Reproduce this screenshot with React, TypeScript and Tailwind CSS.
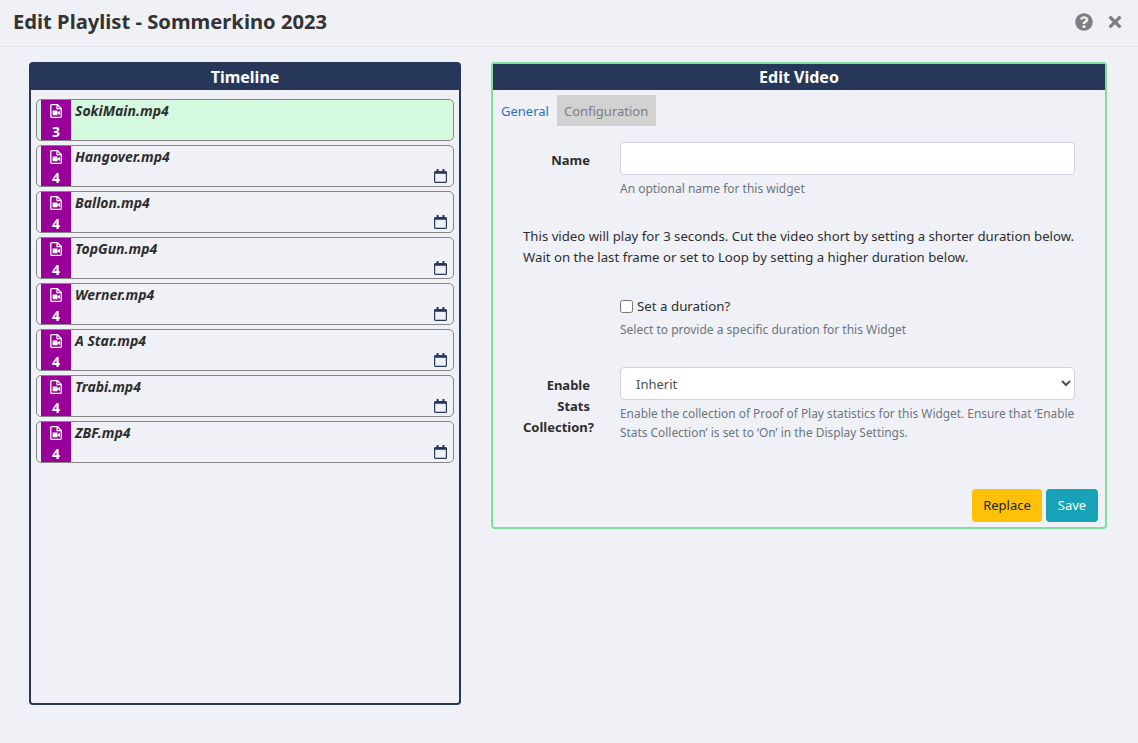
import { FaQuestionCircle, FaTimes } from "react-icons/fa";

const items = [
  { name: "SokiMain.mp4", duration: 3, active: true },
  { name: "Hangover.mp4", duration: 4 },
  { name: "Ballon.mp4", duration: 4 },
  { name: "TopGun.mp4", duration: 4 },
  { name: "Werner.mp4", duration: 4 },
  { name: "A Star.mp4", duration: 4 },
  { name: "Trabi.mp4", duration: 4 },
  { name: "ZBF.mp4", duration: 4 },
];

function FileVideoIcon() {
  return (
    <svg viewBox="0 0 12 14" className="mt-1 h-[14px] w-[12px]" fill="none">
      <path d="M1.6.7h5.9l3.8 3.8v8c0 .5-.3.8-.8.8H1.6c-.5 0-.8-.3-.8-.8V1.5c0-.5.3-.8.8-.8z" stroke="currentColor" strokeWidth="1.3" />
      <path d="M7 .7v4h4" stroke="currentColor" strokeWidth="1.2" />
      <rect x="2.6" y="6.4" width="5" height="4.8" rx=".6" fill="currentColor" />
      <path d="M7.6 8.4 10 6.8v4.2L7.6 9.4z" fill="currentColor" />
    </svg>
  );
}

function CalendarIcon() {
  return (
    <svg viewBox="0 0 13 14" className="absolute right-[6px] bottom-[3px] h-[14px] w-[13px] text-[#28385c]" fill="none">
      <rect x=".6" y="2.6" width="11.8" height="10.8" rx="1" stroke="currentColor" strokeWidth="1.2" />
      <rect x=".6" y="2.4" width="11.8" height="2.4" fill="currentColor" />
      <rect x="2.6" y="0" width="2" height="3.4" fill="currentColor" />
      <rect x="8.4" y="0" width="2" height="3.4" fill="currentColor" />
    </svg>
  );
}

function TimelineItem({ name, duration, active }: { name: string; duration: number; active?: boolean }) {
  return (
    <div
      className={`flex h-[42px] rounded-[5px] border border-[#858585] pl-1 ${active ? "bg-[#d5f8e0]" : ""}`}
    >
      <div className="flex w-[30px] flex-col items-center bg-[#99009a] text-white">
        <FileVideoIcon />
        <span className="mt-auto mb-[-1px] text-[14px] leading-[19px] font-bold">{duration}</span>
      </div>
      <div className="relative flex-1 pl-1">
        <span className="block text-[14px] leading-[21px] font-bold text-[#2e2e2e] italic">{name}</span>
        {!active && <CalendarIcon />}
      </div>
    </div>
  );
}

export default function App() {
  return (
    <div className="h-[743px] w-[1138px] overflow-hidden bg-[#f0f1f7] font-['Noto_Sans','Open_Sans',sans-serif] text-[13px] text-[#2e2e2e]">
      <div className="flex h-[47px] items-center justify-between border-b border-[#dee2e6] pr-[16px] pb-[3px] pl-[13px]">
        <h1 className="mt-[-1px] text-[20.2px] leading-[44px] font-bold text-[#333333]">Edit Playlist - Sommerkino 2023</h1>
        <div className="flex items-center gap-[15px] text-[#7f7f7f]">
          <FaQuestionCircle className="h-[18px] w-[18px]" />
          <FaTimes className="h-[18px] w-[14px]" />
        </div>
      </div>

      <div className="flex items-start pt-[15px] pl-[29px]">
        <section className="h-[643px] w-[432px] rounded-[4px] border-2 border-[#27375a]">
          <h2 className="h-[26px] bg-[#27375a] text-center text-[16px] leading-[26px] font-bold text-white">Timeline</h2>
          <div className="flex flex-col gap-1 px-[5px] pt-[9px]">
            {items.map((item) => (
              <TimelineItem key={item.name} {...item} />
            ))}
          </div>
        </section>

        <section className="ml-[30px] h-[467px] w-[616px] rounded-[4px] border-2 border-[#7de09a]">
          <h2 className="h-[26px] bg-[#27375a] text-center text-[16px] leading-[26px] font-bold text-white">Edit Video</h2>
          <div className="mt-[5px] flex h-[31px] items-center">
            <span className="px-2 pt-[2px] text-[#2d72b4]">General</span>
            <span className="flex h-[31px] w-[99px] items-center bg-[#d2d2d2] px-[7px] pt-[2px] text-[#7d7d7d]">Configuration</span>
          </div>

          <div className="mt-[16px] grid grid-cols-[67px_455px] gap-x-[30px] pl-[30px]">
            <label className="pt-[8px] text-right leading-[21px] font-bold">Name</label>
            <div>
              <input className="h-[33px] w-[455px] rounded-[4px] border border-[#ced4da] bg-white" />
              <p className="mt-[5px] text-[12px] leading-[18px] text-[#6c757d]">An optional name for this widget</p>
            </div>
          </div>

          <p className="mt-[28px] ml-[30px] text-[13.2px] leading-[21px]">
            This video will play for 3 seconds. Cut the video short by setting a shorter duration below.
            <br />
            Wait on the last frame or set to Loop by setting a higher duration below.
          </p>

          <div className="mt-[28px] ml-[127px]">
            <label className="flex h-[21px] items-center text-[13.3px]">
              <input type="checkbox" className="mr-[4px] h-[13px] w-[13px]" />
              Set a duration?
            </label>
            <p className="mt-[4px] text-[12px] leading-[18px] text-[#6c757d]">Select to provide a specific duration for this Widget</p>
          </div>

          <div className="mt-[28px] grid grid-cols-[67px_455px] gap-x-[30px] pl-[30px]">
            <label className="pt-[8px] text-right leading-[21px] font-bold">Enable Stats Collection?</label>
            <div>
              <select className="h-[33px] w-[455px] rounded-[4px] border border-[#ced4da] bg-white pl-[11px] text-[13px] text-[#495057]">
                <option>Inherit</option>
              </select>
              <p className="mt-[4px] text-[11.9px] leading-[19px] whitespace-nowrap text-[#6c757d]">
                Enable the collection of Proof of Play statistics for this Widget. Ensure that ‘Enable
                <br />
                Stats Collection’ is set to ‘On’ in the Display Settings.
              </p>
            </div>
          </div>

          <div className="mt-[47px] flex justify-end gap-1 pr-[7px]">
            <button className="h-[33px] w-[70px] rounded-[4px] bg-[#ffc107] text-[#212529]">Replace</button>
            <button className="h-[33px] w-[52px] rounded-[4px] bg-[#17a2b8] text-white">Save</button>
          </div>
        </section>
      </div>
    </div>
  );
}
